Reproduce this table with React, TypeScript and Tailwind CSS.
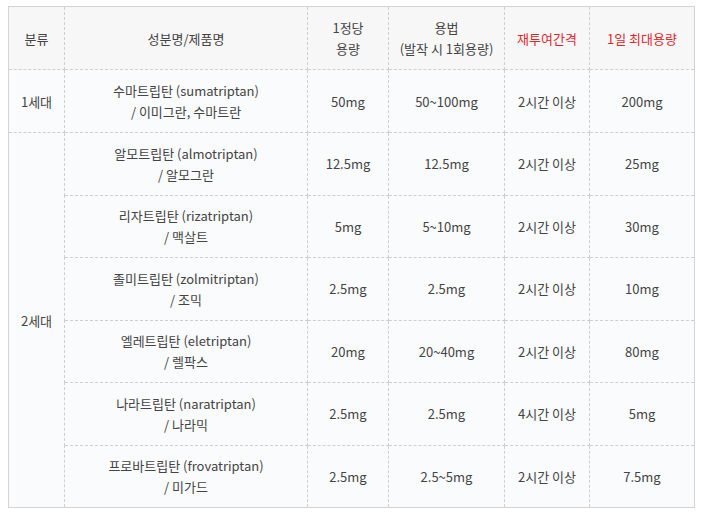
const rows = [
  { name: '알모트립탄 (almotriptan)', brand: '/ 알모그란', dose: '12.5mg', use: '12.5mg', gap: '2시간 이상', max: '25mg' },
  { name: '리자트립탄 (rizatriptan)', brand: '/ 맥살트', dose: '5mg', use: '5~10mg', gap: '2시간 이상', max: '30mg' },
  { name: '졸미트립탄 (zolmitriptan)', brand: '/ 조믹', dose: '2.5mg', use: '2.5mg', gap: '2시간 이상', max: '10mg' },
  { name: '엘레트립탄 (eletriptan)', brand: '/ 렐팍스', dose: '20mg', use: '20~40mg', gap: '2시간 이상', max: '80mg' },
  { name: '나라트립탄 (naratriptan)', brand: '/ 나라믹', dose: '2.5mg', use: '2.5mg', gap: '4시간 이상', max: '5mg' },
  { name: '프로바트립탄 (frovatriptan)', brand: '/ 미가드', dose: '2.5mg', use: '2.5~5mg', gap: '2시간 이상', max: '7.5mg' },
];

const cell = 'border border-dashed border-[#cfcfcf] text-center align-middle px-1';

export default function App() {
  return (
    <div
      className="w-[702px] h-[517px] bg-white pl-2 pt-[6px] text-[13px] leading-[21px] text-[#444]"
      style={{ fontFamily: '"Noto Sans CJK KR", "Noto Sans", sans-serif' }}
    >
      <table className="table-fixed border-collapse border border-solid border-[#d4d4d4] w-[686px]">
        <colgroup>
          <col className="w-[56px]" />
          <col className="w-[243px]" />
          <col className="w-[81px]" />
          <col className="w-[116px]" />
          <col className="w-[85px]" />
          <col className="w-[105px]" />
        </colgroup>
        <thead>
          <tr className="h-[63px] bg-[#f7f7f7]">
            <th className={`${cell} font-normal`}>분류</th>
            <th className={`${cell} font-normal`}>성분명/제품명</th>
            <th className={`${cell} font-normal`}>1정당<br />용량</th>
            <th className={`${cell} font-normal`}>용법<br />(발작 시 1회용량)</th>
            <th className={`${cell} font-normal text-[#e0262e]`}>재투여간격</th>
            <th className={`${cell} font-normal text-[#e0262e]`}>1일 최대용량</th>
          </tr>
        </thead>
        <tbody className="bg-[#fafbfc]">
          <tr className="h-[63px]">
            <td className={cell}>1세대</td>
            <td className={cell}>수마트립탄 (sumatriptan)<br />/ 이미그란, 수마트란</td>
            <td className={cell}>50mg</td>
            <td className={cell}>50~100mg</td>
            <td className={cell}>2시간 이상</td>
            <td className={cell}>200mg</td>
          </tr>
          {rows.map((r, i) => (
            <tr key={r.name} className="h-[62.5px]">
              {i === 0 && (
                <td rowSpan={6} className={cell}>2세대</td>
              )}
              <td className={cell}>{r.name}<br />{r.brand}</td>
              <td className={cell}>{r.dose}</td>
              <td className={cell}>{r.use}</td>
              <td className={cell}>{r.gap}</td>
              <td className={cell}>{r.max}</td>
            </tr>
          ))}
        </tbody>
      </table>
    </div>
  );
}
